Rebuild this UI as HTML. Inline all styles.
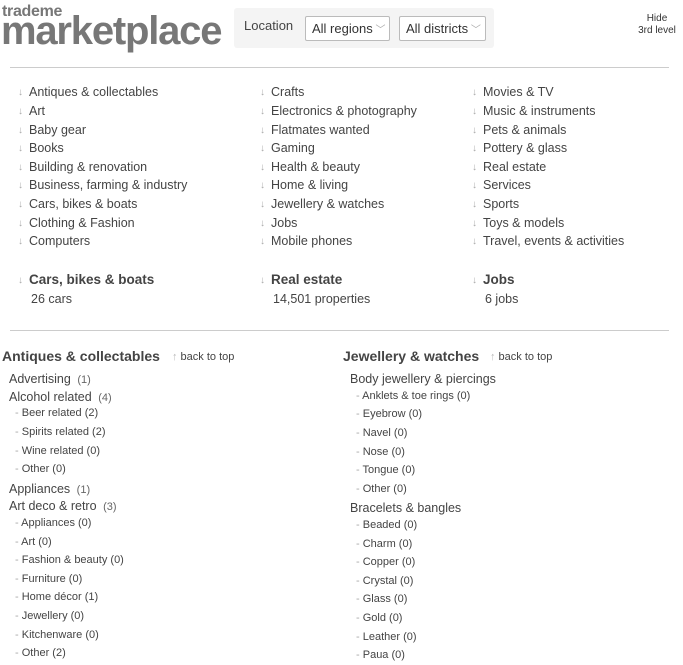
<!DOCTYPE html>
<html><head><meta charset="utf-8"><style>
*{margin:0;padding:0;box-sizing:border-box}
body{width:683px;height:665px;background:#fff;font-family:"Liberation Sans",Arial,sans-serif;color:#444;position:relative;overflow:hidden}
.a{position:absolute;white-space:nowrap}
.m{font-size:12.5px;line-height:16px}
.s{font-size:11px;line-height:14px}
.ar{position:absolute;color:#aaa;font-size:10px;line-height:16px}
.c{color:#666;font-size:11px}
.hr{position:absolute;left:10px;width:659px;height:1px;background:#ccc}
.sel{position:absolute;top:16px;height:25px;border:1px solid #bbb;border-radius:2px;background:#fff;font-size:13px;line-height:23px;padding-left:6px;color:#333}
.sel i{font-style:normal;color:#aaa;font-size:10px}
</style></head><body>
<div class="a" style="left:2px;top:3px;font-size:16px;font-weight:bold;color:#777;letter-spacing:-0.3px">trademe</div>
<div class="a" style="left:1px;top:10px;font-size:40px;font-weight:bold;color:#777;letter-spacing:-1.2px;line-height:42px">marketplace</div>
<div class="a" style="left:234px;top:8px;width:260px;height:40px;background:#f4f4f4;border-radius:3px"></div>
<div class="a" style="left:244px;top:18px;font-size:13px;color:#444">Location</div>
<div class="sel" style="left:305px;width:85px">All regions<i> ﹀</i></div>
<div class="sel" style="left:399px;width:87px">All districts<i> ﹀</i></div>
<div class="a" style="left:637px;top:13px;font-size:10px;line-height:12px;text-align:center;color:#333;width:40px">Hide<br>3rd level</div>
<div class="hr" style="top:67px"></div>
<div class="hr" style="top:330px"></div>
<div id="lists"></div>
<script>
var L=document.getElementById('lists'),h='';
function t(x,y,txt,cls,st){h+='<div class="a '+cls+'" style="left:'+x+'px;top:'+y+'px;'+(st||'')+'">'+txt+'</div>';}
var cols=[[18,["Antiques &amp; collectables","Art","Baby gear","Books","Building &amp; renovation","Business, farming &amp; industry","Cars, bikes &amp; boats","Clothing &amp; Fashion","Computers"]],
[260,["Crafts","Electronics &amp; photography","Flatmates wanted","Gaming","Health &amp; beauty","Home &amp; living","Jewellery &amp; watches","Jobs","Mobile phones"]],
[472,["Movies &amp; TV","Music &amp; instruments","Pets &amp; animals","Pottery &amp; glass","Real estate","Services","Sports","Toys &amp; models","Travel, events &amp; activities"]]];
var ys=[92,111,130,148,167,185,204,223,241];
cols.forEach(function(c){c[1].forEach(function(n,i){h+='<div class="ar" style="left:'+c[0]+'px;top:'+(ys[i]-7)+'px">↓</div>';t(c[0]+11,ys[i]-8,n,'m');});});
[[18,"Cars, bikes &amp; boats","26 cars"],[260,"Real estate","14,501 properties"],[472,"Jobs","6 jobs"]].forEach(function(c){
h+='<div class="ar" style="left:'+c[0]+'px;top:273px">↓</div>';
t(c[0]+11,272,c[1],'m','font-weight:bold;font-size:13.5px');t(c[0]+13,291,c[2],'m');});
t(2,348,"Antiques &amp; collectables",'m','font-weight:bold;font-size:14px');
t(172,350,"<span style='color:#bbb'>↑</span> back to top",'s');
t(343,348,"Jewellery &amp; watches",'m','font-weight:bold;font-size:14px');
t(490,350,"<span style='color:#bbb'>↑</span> back to top",'s');
function items(x,arr){arr.forEach(function(it){if(it[0]=='M')t(x,it[1]-8,it[2],'m');else t(x+6,it[1]-7,'<span style="color:#aaa">- </span>'+it[2],'s');});}
items(9,[['M',379,'Advertising <span class="c">&nbsp;(1)</span>'],['M',397,'Alcohol related <span class="c">&nbsp;(4)</span>'],['S',413,'Beer related (2)'],['S',432,'Spirits related (2)'],['S',451,'Wine related (0)'],['S',469,'Other (0)'],['M',489,'Appliances <span class="c">&nbsp;(1)</span>'],['M',506,'Art deco &amp; retro <span class="c">&nbsp;(3)</span>'],['S',523,'Appliances (0)'],['S',542,'Art (0)'],['S',560,'Fashion &amp; beauty (0)'],['S',579,'Furniture (0)'],['S',597,'Home décor (1)'],['S',616,'Jewellery (0)'],['S',635,'Kitchenware (0)'],['S',653,'Other (2)']]);
items(350,[['M',379,'Body jewellery &amp; piercings'],['S',396,'Anklets &amp; toe rings (0)'],['S',414,'Eyebrow (0)'],['S',433,'Navel (0)'],['S',452,'Nose (0)'],['S',470,'Tongue (0)'],['S',489,'Other (0)'],['M',508,'Bracelets &amp; bangles'],['S',525,'Beaded (0)'],['S',544,'Charm (0)'],['S',562,'Copper (0)'],['S',581,'Crystal (0)'],['S',599,'Glass (0)'],['S',618,'Gold (0)'],['S',637,'Leather (0)'],['S',655,'Paua (0)']]);
L.innerHTML=h;
</script>
</body></html>
